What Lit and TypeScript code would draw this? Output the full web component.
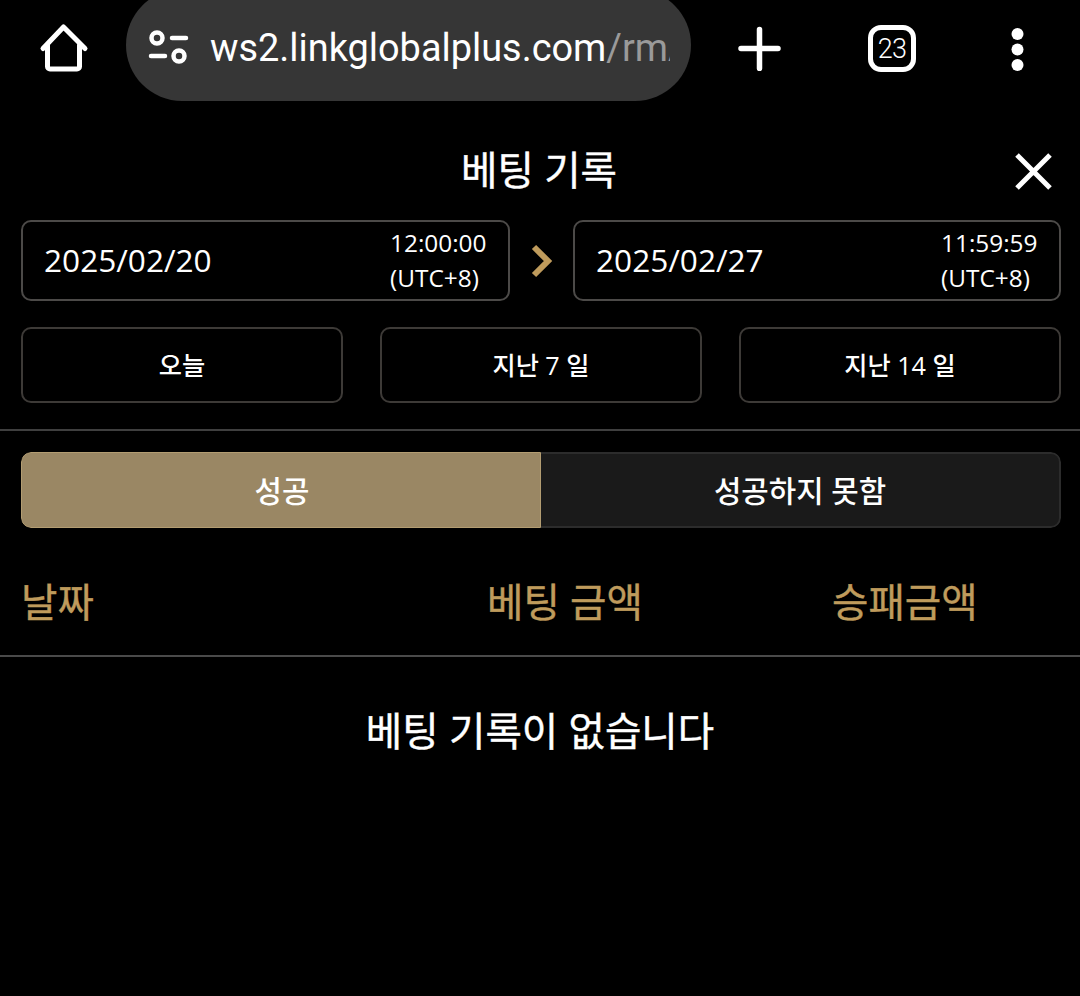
import { LitElement, html, css } from "lit";
import { customElement } from "lit/decorators.js";

@customElement("app-root")
export class AppRoot extends LitElement {
  static styles = css`
    :host {
      display: block;
      width: 1080px;
      height: 996px;
      background: #000;
      overflow: hidden;
      color: #fff;
      font-family: "Open Sans", "Noto Sans CJK KR", sans-serif;
    }
    .toolbar {
      height: 101px;
      display: flex;
      align-items: flex-end;
      padding-left: 126px;
      position: relative;
    }
    .pill {
      width: 565px;
      height: 112px;
      flex: none;
      box-sizing: border-box;
      border-radius: 56px;
      background: #363636;
      display: flex;
      align-items: center;
      padding: 6px 20px 0 22px;
      gap: 20px;
      font-family: Roboto, sans-serif;
      font-size: 37.9px;
      overflow: hidden;
    }
    .url {
      width: 460px;
      flex: none;
      overflow: hidden;
      white-space: nowrap;
    }
    .url span { color: #9a9a9a; }
    .tool { position: absolute; display: block; }
    .home { left: 38px; top: 23px; }
    .plus { left: 737px; top: 26px; }
    .dots { left: 1005px; top: 27px; }
    .tabs {
      left: 868px;
      top: 25px;
      width: 48px;
      height: 47px;
      box-sizing: border-box;
      border: 5px solid #fff;
      border-radius: 13px;
      display: flex;
      align-items: center;
      justify-content: center;
      font-family: Roboto, sans-serif;
      font-size: 27px;
      font-weight: 300;
      letter-spacing: -0.8px;
    }
    .head {
      height: 119px;
      display: flex;
      align-items: center;
      justify-content: center;
      position: relative;
      box-sizing: border-box;
      padding: 20px 2px 0 0;
    }
    h1 {
      margin: 0;
      font-size: 39.6px;
      font-weight: 400;
      line-height: 1;
      -webkit-text-stroke: 0.4px #fff;
    }
    .close { position: absolute; left: 1014px; top: 51px; }
    .dates {
      display: grid;
      grid-template-columns: 489px 63px 488px;
      padding: 0 20px 0 21px;
      height: 81px;
      align-items: center;
    }
    .date {
      height: 81px;
      box-sizing: border-box;
      border: 2px solid #4c4a48;
      border-radius: 10px;
      display: flex;
      align-items: center;
      justify-content: space-between;
      padding: 0 21px;
    }
    .day { font-size: 31.6px; line-height: 40px; padding-bottom: 2px; }
    .time {
      display: flex;
      flex-direction: column;
      gap: 2px;
      font-size: 24.4px;
      line-height: 33px;
      width: 97px;
      white-space: nowrap;
      padding-bottom: 1px;
    }
    .arrow { justify-self: center; display: block; }
    .quick {
      display: grid;
      grid-template-columns: repeat(3, 322px);
      justify-content: space-between;
      padding: 26px 19px 26px 21px;
    }
    .quick div {
      height: 76px;
      box-sizing: border-box;
      border: 2px solid #3d3a37;
      border-radius: 10px;
      display: flex;
      align-items: center;
      justify-content: center;
      font-size: 25.2px;
      font-weight: 500;
      padding-bottom: 3px;
    }
    .rule { height: 2px; background: #3f3f3f; }
    .seg {
      margin: 21px 19px 0 21px;
      height: 76px;
      display: grid;
      grid-template-columns: 520px 1fr;
      border-radius: 10px;
      overflow: hidden;
      font-size: 29.8px;
      font-weight: 500;
    }
    .seg div {
      display: flex;
      align-items: center;
      justify-content: center;
      box-sizing: border-box;
      padding-bottom: 2px;
    }
    .on { background: #9a8764; border: 1px solid #b39d72; border-radius: 10px 0 0 10px; padding-left: 2px; }
    .off { background: #1a1a1a; border: 2px solid #2c2c2c; border-left: 0; border-radius: 0 10px 10px 0; }
    .cols {
      display: grid;
      grid-template-columns: 466px 345px 1fr;
      height: 127px;
      align-items: center;
      padding: 16px 0 0 21px;
      box-sizing: border-box;
      color: #bf9b5c;
      font-size: 39.6px;
      font-weight: 400;
      -webkit-text-stroke: 0.4px #bf9b5c;
    }
    .rule2 { height: 2px; background: #4a4a4a; }
    .empty {
      text-align: center;
      font-size: 39.6px;
      font-weight: 400;
      -webkit-text-stroke: 0.4px #fff;
      padding-top: 48px;
      line-height: 52px;
    }
  `;

  render() {
    return html`
      <div class="toolbar">
        <svg class="tool home" width="52" height="52" viewBox="0 0 52 52" fill="none" stroke="#fff" stroke-width="5" stroke-linecap="round" stroke-linejoin="round">
          <path d="M5 25.500 25.500 4 47 25.500M9.500 22v21.500a2.500 2.500 0 0 0 2.500 2.500h27a2.500 2.500 0 0 0 2.500-2.500V22"/>
        </svg>
        <div class="pill">
          <svg width="42" height="36" viewBox="0 0 42 36" fill="none" stroke="#fff" stroke-width="4.500" stroke-linecap="round" style="flex:none">
            <circle cx="9" cy="8" r="5.500"/>
            <path d="M24 8h14M3 26h14"/>
            <circle cx="31" cy="26" r="5.500"/>
          </svg>
          <div class="url">ws2.linkglobalplus.com<span>/rmAccount</span></div>
        </div>
        <svg class="tool plus" width="45" height="45" viewBox="0 0 45 45" stroke="#fff" stroke-width="5.500" stroke-linecap="round">
          <path d="M22.500 3.500v39M4 22.500h37"/>
        </svg>
        <div class="tool tabs">23</div>
        <svg class="tool dots" width="24" height="46" viewBox="0 0 24 46" fill="#fff">
          <circle cx="12.500" cy="7" r="6"/>
          <circle cx="12.500" cy="22.500" r="6"/>
          <circle cx="12.500" cy="38" r="6"/>
        </svg>
      </div>

      <div class="head">
        <h1>베팅 기록</h1>
        <svg class="close" width="40" height="40" viewBox="0 0 40 40" stroke="#fff" stroke-width="5">
          <path d="M3 3l33 33M36 3 3 36"/>
        </svg>
      </div>

      <div class="dates">
        <div class="date">
          <span class="day">2025/02/20</span>
          <span class="time"><span>12:00:00</span><span>(UTC+8)</span></span>
        </div>
        <svg class="arrow" width="24" height="34" viewBox="0 0 24 34" fill="none" stroke="#bf9b5c" stroke-width="6">
          <path d="M4 3l14 14L4 31"/>
        </svg>
        <div class="date">
          <span class="day">2025/02/27</span>
          <span class="time"><span>11:59:59</span><span>(UTC+8)</span></span>
        </div>
      </div>

      <div class="quick">
        <div>오늘</div>
        <div>지난 7 일</div>
        <div>지난 14 일</div>
      </div>
      <div class="rule"></div>

      <div class="seg">
        <div class="on">성공</div>
        <div class="off">성공하지 못함</div>
      </div>

      <div class="cols">
        <span>날짜</span>
        <span>베팅 금액</span>
        <span>승패금액</span>
      </div>
      <div class="rule2"></div>

      <div class="empty">베팅 기록이 없습니다</div>
    `;
  }
}
